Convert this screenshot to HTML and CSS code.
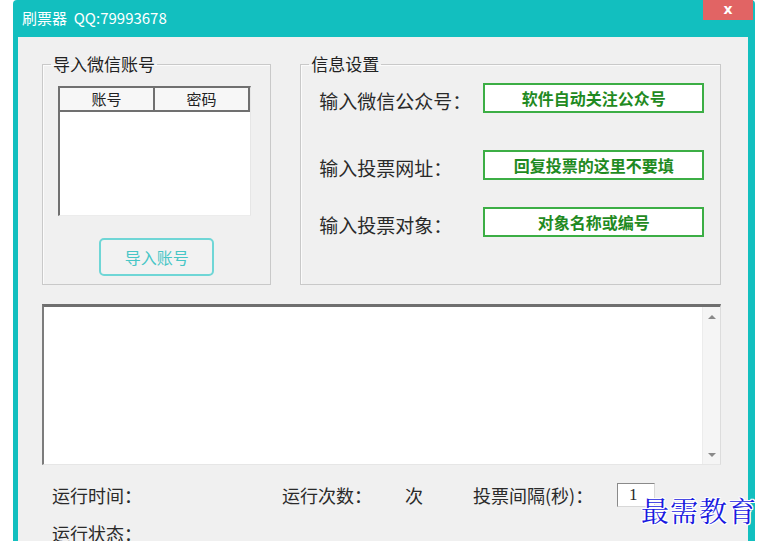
FILE: index.html
```html
<!DOCTYPE html>
<html lang="zh-CN">
<head>
<meta charset="utf-8">
<title>刷票器</title>
<link rel="stylesheet" href="styles.css">
</head>
<body>
<div class="screen">
  <div class="window">
    <div class="titlebar">
      <span class="title">刷票器 &nbsp;QQ:79993678</span>
      <div class="close">x</div>
    </div>
    <div class="client">
      <div class="groups">
        <fieldset class="group g-accounts">
          <legend>导入微信账号</legend>
          <div class="grid">
            <div class="grid-head">
              <div class="hcell">账号</div>
              <div class="hcell">密码</div>
            </div>
            <div class="grid-body"></div>
          </div>
          <div class="btn-row"><div class="btn-import">导入账号</div></div>
        </fieldset>
        <fieldset class="group g-info">
          <legend>信息设置</legend>
          <div class="form-row r1">
            <div class="label">输入微信公众号：</div>
            <div class="field">软件自动关注公众号</div>
          </div>
          <div class="form-row r2">
            <div class="label">输入投票网址：</div>
            <div class="field">回复投票的这里不要填</div>
          </div>
          <div class="form-row r3">
            <div class="label">输入投票对象：</div>
            <div class="field">对象名称或编号</div>
          </div>
        </fieldset>
      </div>
      <div class="log">
        <div class="log-text"></div>
        <div class="scrollbar">
          <span class="arrow up"></span>
          <span class="arrow down"></span>
        </div>
      </div>
      <div class="status">
        <div class="status-row">
          <span class="st-time">运行时间：</span>
          <span class="st-count">运行次数：</span>
          <span class="st-unit">次</span>
          <span class="st-interval">投票间隔(秒)：</span>
          <span class="num-box">1</span>
        </div>
        <div class="status-row row2">
          <span class="st-time">运行状态：</span>
        </div>
      </div>
    </div>
  </div>
  <div class="watermark">最需教育</div>
</div>
</body>
</html>
```

FILE: styles.css
```css
html, body {
  margin: 0;
  padding: 0;
  background: #ffffff;
}
.screen {
  position: relative;
  width: 764px;
  height: 541px;
  overflow: hidden;
  font-family: "Noto Sans CJK SC", "Noto Sans", sans-serif;
  color: #222;
}
.window {
  margin-left: 13px;
  width: 742px;
  height: 560px;
  background: #12bfbf;
  border-radius: 4px 4px 0 0;
  display: flex;
  flex-direction: column;
}
.titlebar {
  height: 37px;
  display: flex;
  align-items: flex-start;
  flex: none;
}
.title {
  color: #ffffff;
  font-size: 15px;
  line-height: 18px;
  margin: 9px 0 0 9px;
  font-family: "Noto Sans CJK SC", "Noto Sans", sans-serif;
}
.close {
  margin-left: auto;
  margin-right: 2px;
  width: 50px;
  height: 20px;
  background: #e16464;
  color: #fff;
  font-family: "DejaVu Sans", sans-serif;
  font-size: 14px;
  line-height: 18px;
  text-align: center;
  font-weight: bold;
}
.client {
  flex: 1;
  margin: 0 7px 0 5px;
  background: #f0f0f0;
  padding: 17px 27px 0 24px;
}
.groups {
  display: flex;
  gap: 29px;
}
.group {
  margin: 0;
  padding: 0;
  border: 1px solid #c9c9c9;
  box-shadow: inset 1px 1px 0 #fbfbfb;
  box-sizing: border-box;
  height: 231px;
  min-width: 0;
}
.group legend {
  margin-left: 8px;
  padding: 0 2px;
  font-size: 17px;
  line-height: 20px;
  color: #222;
}
.g-accounts { width: 230px; }
.g-info { width: 422px; }

.grid {
  margin: 12px 0 0 15px;
  width: 193px;
  height: 130px;
  box-sizing: border-box;
  background: #fff;
  border-top: 2px solid #707070;
  border-left: 2px solid #707070;
  border-right: 1px solid #e6e6e6;
  border-bottom: 1px solid #ececec;
  display: flex;
  flex-direction: column;
}
.grid-head {
  display: flex;
  height: 22px;
  background: #f7f7f7;
  border-bottom: 2px solid #707070;
}
.hcell {
  flex: 1;
  text-align: center;
  font-size: 15px;
  line-height: 22px;
  border-right: 2px solid #707070;
}
.grid-body { flex: 1; }
.btn-row {
  display: flex;
  justify-content: center;
  margin-top: 22px;
}
.btn-import {
  width: 115px;
  height: 38px;
  box-sizing: border-box;
  border: 2px solid #6fd6d6;
  border-radius: 5px;
  color: #47c6c6;
  font-size: 16px;
  line-height: 34px;
  text-align: center;
  background: #f2f2f2;
}

.form-row {
  display: flex;
  align-items: flex-start;
  padding-left: 18px;
}
.form-row.r1 { margin-top: 9px; }
.form-row.r2 { margin-top: 37px; }
.form-row.r3 { margin-top: 27px; }
.label {
  width: 164px;
  height: 30px;
  font-size: 19px;
  line-height: 36px;
  color: #2a2a2a;
}
.field {
  width: 221px;
  height: 30px;
  box-sizing: border-box;
  border: 2px solid #3cae45;
  background: #fff;
  color: #1f8a22;
  font-weight: bold;
  font-size: 16px;
  line-height: 26px;
  text-align: center;
}

.log {
  margin-top: 19px;
  height: 161px;
  box-sizing: border-box;
  background: #fff;
  border-top: 3px solid #6f6f6f;
  border-left: 2px solid #7c7c7c;
  border-right: 1px solid #dcdcdc;
  border-bottom: 1px solid #e6e6e6;
  display: flex;
}
.log-text { flex: 1; }
.scrollbar {
  width: 17px;
  background: #f5f5f5;
  border-left: 1px solid #ececec;
  display: flex;
  flex-direction: column;
  justify-content: space-between;
  align-items: center;
  padding: 8px 0 7px;
}
.arrow {
  width: 0;
  height: 0;
  border-left: 4px solid transparent;
  border-right: 4px solid transparent;
}
.arrow.up { border-bottom: 4px solid #8a8a8a; }
.arrow.down { border-top: 4px solid #8a8a8a; }

.status {
  padding-left: 10px;
}
.status-row {
  display: flex;
  align-items: center;
  height: 24px;
  margin-top: 18px;
  font-size: 18px;
  color: #2a2a2a;
}
.status-row.row2 { margin-top: 14px; }
.st-time { width: 230px; }
.st-count { width: 123px; }
.st-unit { width: 68px; }
.st-interval { width: 144px; }
.num-box {
  width: 38px;
  height: 24px;
  box-sizing: border-box;
  border: 1px solid #8a8a8a;
  border-right-color: #d8d8d8;
  border-bottom-color: #d8d8d8;
  background: #fff;
  font-family: "Liberation Serif", serif;
  font-size: 17px;
  line-height: 22px;
  padding-left: 11px;
}

.watermark {
  position: absolute;
  left: 641px;
  top: 492px;
  font-family: "Noto Serif CJK SC", "Noto Sans CJK SC", serif;
  font-size: 28px;
  line-height: 36px;
  color: #1a1ae0;
  letter-spacing: 1px;
  text-shadow: -1px 0 #fff, 1px 0 #fff, 0 -1px #fff, 0 1px #fff, 1px 1px #fff, -1px -1px #fff, 1px -1px #fff, -1px 1px #fff;
}
```
